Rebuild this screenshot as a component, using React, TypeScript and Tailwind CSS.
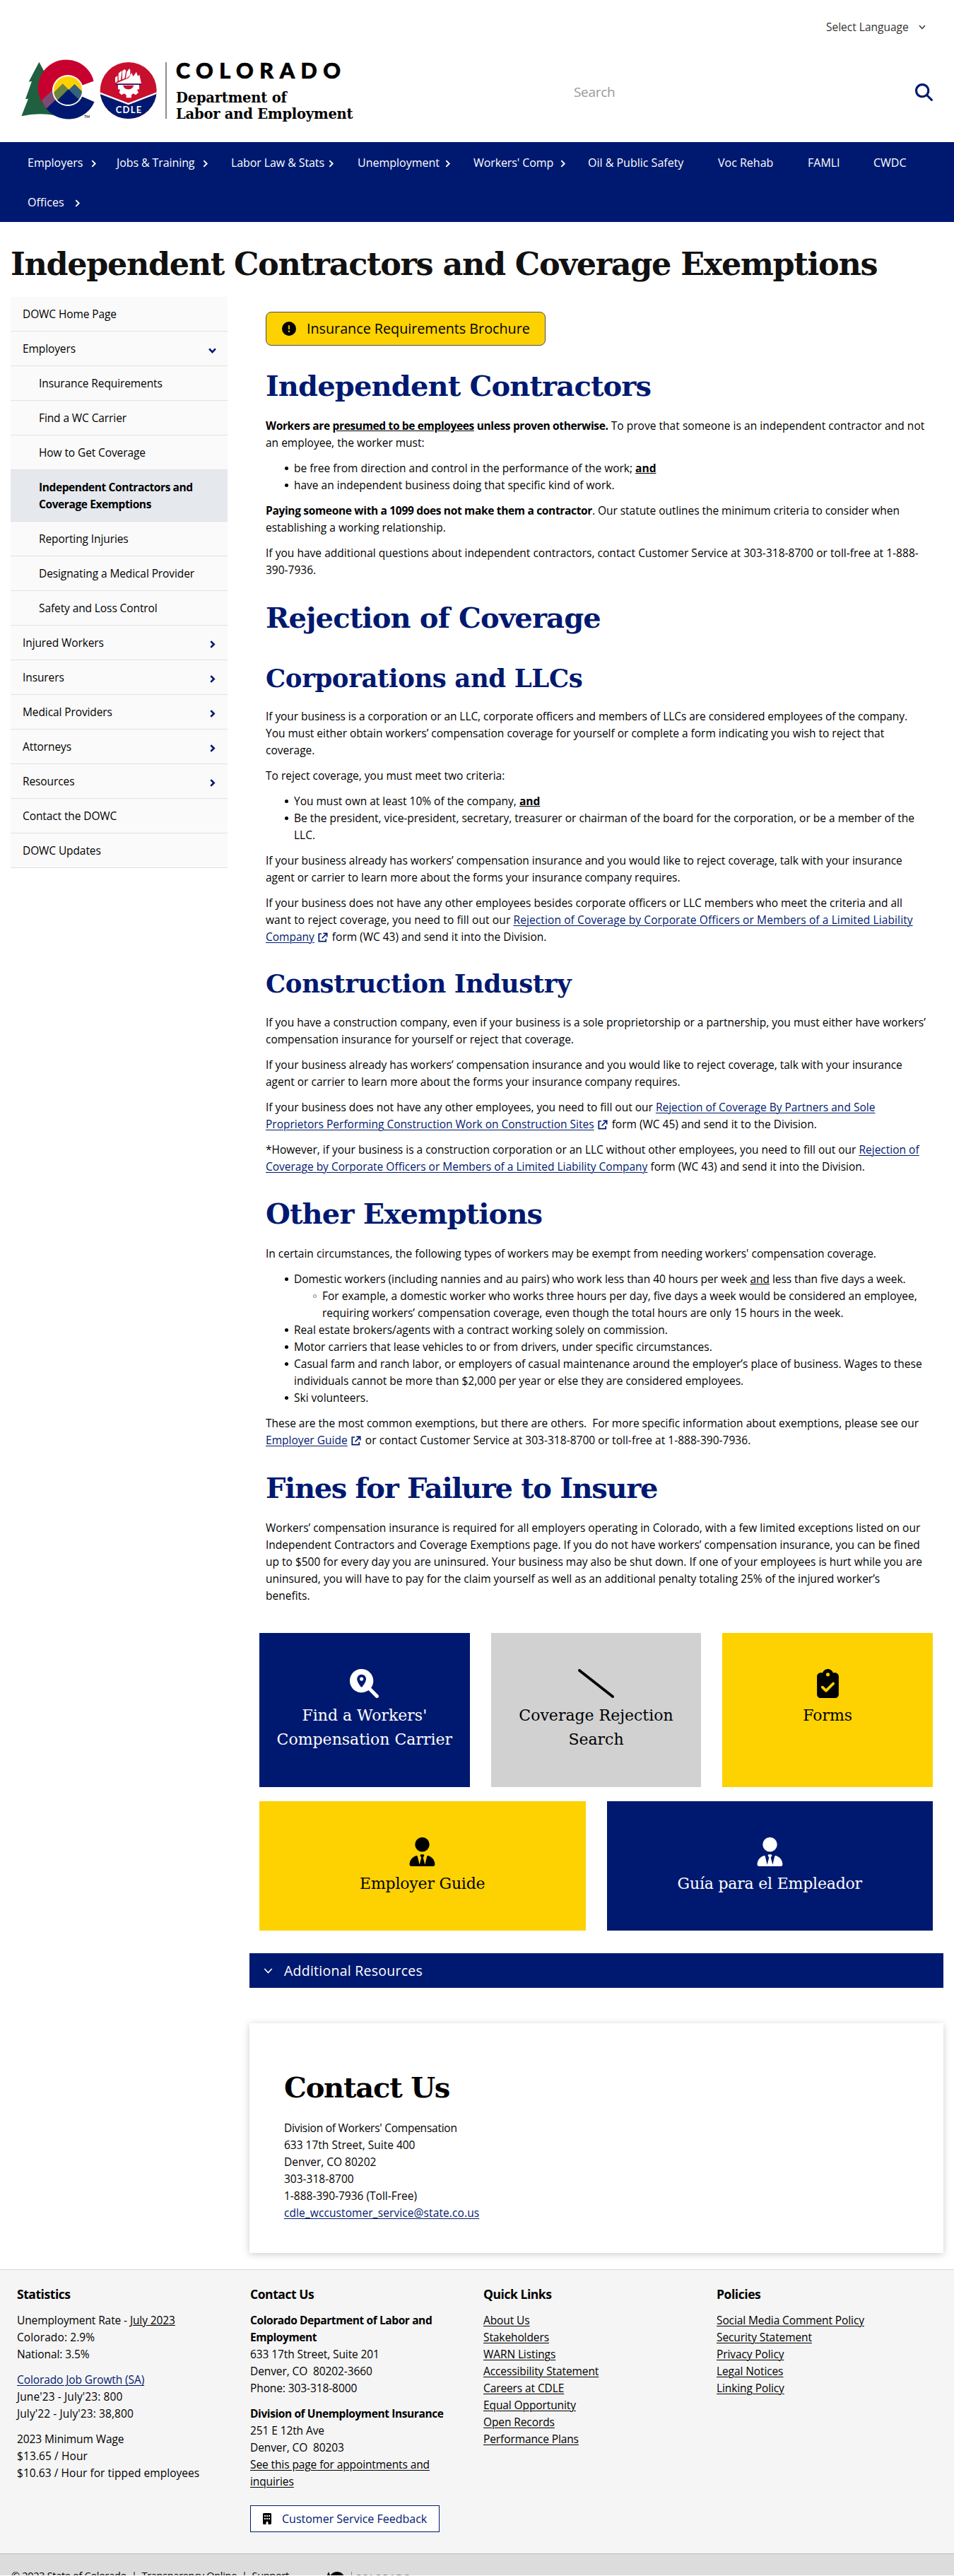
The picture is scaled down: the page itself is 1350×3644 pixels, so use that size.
import React from "react";
import type { ReactNode } from "react";
import {
  FaBuilding,
  FaCircleExclamation,
  FaClipboardCheck,
  FaMagnifyingGlass,
  FaMagnifyingGlassLocation,
  FaSlash,
  FaUserTie,
} from "react-icons/fa6";

type Dir = "right" | "down";

function Chevron({ dir, className }: { dir: Dir; className: string }) {
  return (
    <svg viewBox="0 0 10 10" className={className} fill="none" stroke="currentColor">
      <path d={dir === "right" ? "M3 1 L7 5 L3 9" : "M1 3 L5 7.4 L9 3"} />
    </svg>
  );
}

function ExternalIcon() {
  return (
    <svg viewBox="0 0 14 14" className="ml-[5px] mr-[2px] inline-block size-[14px] align-[-2px] text-[#001970]" fill="none" stroke="currentColor" strokeWidth="1.7">
      <path d="M5 2 H1.3 V12.7 H11.2 V9" />
      <path d="M7.5 1.3 H12.7 V6.5 M12.5 1.5 L5.5 8.5" />
    </svg>
  );
}

function Logo() {
  return (
    <svg viewBox="0 0 660 330" className="h-[110px] w-[220px]">
      <path d="M106 38 L62 122 L75 120 L48 196 L60 194 L31 268 Q100 252 172 264 L172 120 L148 116 Z" fill="#1f6040" />
      <path d="M338 120 A120 120 0 1 0 130 226 L230 159 Z" fill="#c8002f" />
      <path d="M341 206 A120 120 0 0 1 132 230 L176 182 L230 159 Z" fill="#001970" />
      <path d="M117 200 L160 160 L185 190 L136 236 Q124 220 117 200 Z" fill="#7d4a72" />
      <path d="M230 159 L352 114 L352 212 Z" fill="#ffffff" />
      <circle cx="228" cy="159" r="66" fill="#ffffff" />
      <circle cx="228" cy="159" r="60" fill="#ffd100" />
      <clipPath id="sun">
        <circle cx="228" cy="159" r="60" />
      </clipPath>
      <g clipPath="url(#sun)">
        <path d="M206 130 L150 186 L180 230 L250 174 Z" fill="#6b8440" />
        <path d="M257 132 L210 176 L270 230 L310 185 Z" fill="#35617f" />
        <path d="M230 154 L160 224 L230 260 L300 222 Z" fill="#001970" />
      </g>
      <text x="298" y="277" fontFamily="Lato, sans-serif" fontSize="15" fontWeight="700" fill="#222222">TM</text>

      <clipPath id="badge">
        <circle cx="485" cy="159" r="120" />
      </clipPath>
      <g clipPath="url(#badge)">
        <rect x="360" y="30" width="250" height="260" fill="#c8102e" />
        <path d="M360 170 L485 220 L610 170 V290 H360 Z" fill="#001970" />
        <path d="M360 168 L485 216 L610 168" fill="none" stroke="#ffffff" strokeWidth="7" />
      </g>
      <g fill="#ffffff">
        <path d="M429 126 V104 L439 96 V120 Z" />
        <path d="M443 118 V86 L455 76 L457 80 L453 114 Z" />
        <path d="M459 112 V76 L469 69 L475 74 L469 108 Z" />
        <path d="M478 80 L489 66 L493 72 V92 L482 104 L474 107 Z" />
        <path d="M431 130 L486 106 L499 84 L505 100 L519 80 L525 98 L532 92 L540 130 Z" />
        <path d="M441 135 H531 V153 L522 156 L528 168 L516 178 L506 172 L498 178 V190 H476 V178 L466 172 L456 178 L446 168 L450 156 L441 153 Z" />
      </g>
      <path d="M462 137 A24 24 0 0 0 508 137 Z" fill="#c8102e" />
      <rect x="431" y="131" width="109" height="4" fill="#001970" />
      <text x="431" y="256" textLength="110" fontFamily="Lato, sans-serif" fontSize="39" fontWeight="700" fill="#ffffff">CDLE</text>
      <rect x="643" y="39" width="4" height="240" fill="#555555" />
    </svg>
  );
}

function Header() {
  return (
    <header>
      <div className="flex h-[75px] justify-end pr-[40px] pt-[26px]">
        <div className="flex h-6 items-center text-[15.5px] text-[#333]">
          <span className="w-[132px]">Select Language</span>
          <Chevron dir="down" className="ml-[-1px] size-[10px] stroke-[1.5]" />
        </div>
      </div>
      <div className="flex h-[126px] pl-5">
        <Logo />
        <div className="ml-[9px] flex w-[563px] flex-col">
          <div className="mt-[6px] h-[36px] whitespace-nowrap font-['Lato'] text-[30.5px] font-black leading-[36px] tracking-[8.5px] text-black [-webkit-text-stroke:0.7px_black]">COLORADO</div>
          <div className="mt-[10px] font-['DejaVu_Serif',serif] text-[19.5px] font-bold leading-[23px] tracking-[-0.2px] text-black">
            <div>Department of</div>
            <div>Labor and Employment</div>
          </div>
        </div>
        <div className="flex h-[110px] flex-1 items-center justify-between pr-[30px]">
          <span className="text-[19px] tracking-[-0.3px] text-[#999]">Search</span>
          <FaMagnifyingGlass className="size-[25px] text-[#001970]" />
        </div>
      </div>
    </header>
  );
}

function NavItem({ label, width, gap }: { label: string; width: string; gap?: boolean }) {
  return (
    <div className={`flex items-center ${width}`}>
      <span>{label}</span>
      {gap && <Chevron dir="right" className="ml-auto mt-[3px] size-[11px] stroke-[1.7]" />}
    </div>
  );
}

function Nav() {
  return (
    <nav className="h-[113px] bg-[#001970] pl-[39px] text-[16px] text-white">
      <div className="flex h-[57px] items-center whitespace-nowrap">
        <NavItem label="Employers" width="w-[99px] mr-[27px]" gap />
        <NavItem label="Jobs & Training" width="w-[131px] mr-[31px] tracking-[-0.1px]" gap />
        <NavItem label="Labor Law & Stats" width="w-[147px] mr-[32px] tracking-[-0.1px]" gap />
        <NavItem label="Unemployment" width="w-[133px] mr-[31px]" gap />
        <NavItem label="Workers' Comp" width="w-[132px] mr-[30px] tracking-[-0.1px]" gap />
        <NavItem label="Oil & Public Safety" width="w-[184px]" />
        <NavItem label="Voc Rehab" width="w-[127px]" />
        <NavItem label="FAMLI" width="w-[93px]" />
        <NavItem label="CWDC" width="w-[60px]" />
      </div>
      <div className="flex h-[56px] items-center">
        <NavItem label="Offices" width="w-[76px]" gap />
      </div>
    </nav>
  );
}

type SideItem = { lines: string[]; sub?: boolean; active?: boolean; dir?: Dir };

const sideItems: SideItem[] = [
  { lines: ["DOWC Home Page"] },
  { lines: ["Employers"], dir: "down" },
  { lines: ["Insurance Requirements"], sub: true },
  { lines: ["Find a WC Carrier"], sub: true },
  { lines: ["How to Get Coverage"], sub: true },
  { lines: ["Independent Contractors and", "Coverage Exemptions"], sub: true, active: true },
  { lines: ["Reporting Injuries"], sub: true },
  { lines: ["Designating a Medical Provider"], sub: true },
  { lines: ["Safety and Loss Control"], sub: true },
  { lines: ["Injured Workers"], dir: "right" },
  { lines: ["Insurers"], dir: "right" },
  { lines: ["Medical Providers"], dir: "right" },
  { lines: ["Attorneys"], dir: "right" },
  { lines: ["Resources"], dir: "right" },
  { lines: ["Contact the DOWC"] },
  { lines: ["DOWC Updates"] },
];

function Sidebar() {
  return (
    <aside className="ml-[15px] w-[307px] shrink-0">
      {sideItems.map((item) => (
        <div
          key={item.lines[0]}
          className={`flex items-center justify-between whitespace-nowrap border-b border-[#e2e2e2] py-3 pr-4 leading-6 text-black ${item.sub ? "pl-10" : "pl-[17px]"} ${item.active ? "bg-[#e5e8ed] font-bold tracking-[-0.4px]" : "bg-[#fafafa] tracking-[-0.1px]"}`}
        >
          <div>
            {item.lines.map((l) => (
              <div key={l}>{l}</div>
            ))}
          </div>
          {item.dir && <Chevron dir={item.dir} className="mt-1 size-[11px] stroke-[2.4] text-[#001970]" />}
        </div>
      ))}
    </aside>
  );
}

const L = ({ children, className = "" }: { children: ReactNode; className?: string }) => (
  <span className={`block whitespace-pre ${className}`}>{children}</span>
);
const P = ({ children }: { children: ReactNode }) => <p className="mb-3">{children}</p>;
const A = ({ children }: { children: ReactNode }) => (
  <a className="text-[#001970] underline decoration-1 underline-offset-2">{children}</a>
);
const H2 = ({ children, className }: { children: ReactNode; className: string }) => (
  <h2 className={`whitespace-nowrap font-['DejaVu_Serif',serif] text-[40px] font-bold leading-[50px] text-[#001970] ${className}`}>{children}</h2>
);
const H3 = ({ children, className }: { children: ReactNode; className: string }) => (
  <h3 className={`whitespace-nowrap font-['DejaVu_Serif',serif] text-[35.5px] font-bold leading-[44px] tracking-[-0.4px] text-[#001970] ${className}`}>{children}</h3>
);

function Bullets({ children, hollow }: { children: ReactNode; hollow?: boolean }) {
  return (
    <ul
      className={`pl-10 [&>li]:relative [&>li]:before:absolute [&>li]:before:-left-[13px] [&>li]:before:top-[10px] [&>li]:before:size-[5px] [&>li]:before:rounded-full ${hollow ? "[&>li]:before:border [&>li]:before:border-[#777] [&>li]:before:bg-white" : "mb-3 [&>li]:before:bg-black"}`}
    >
      {children}
    </ul>
  );
}

function Article() {
  return (
    <article className="ml-[23px] mt-[21px] text-black">
      <div className="flex h-[48px] w-[396px] items-center rounded-lg border border-[#4a4a66] bg-[#fdd200] pl-[22px]">
        <FaCircleExclamation className="size-5" />
        <span className="ml-[15px] whitespace-nowrap text-[19.8px] tracking-[-0.03px]">Insurance Requirements Brochure</span>
      </div>

      <H2 className="mb-[19px] mt-8 tracking-[-0.85px]">Independent Contractors</H2>
      <P>
        <L className="tracking-[0.04px]"><b className="tracking-[-0.35px]">Workers are <u>presumed to be employees</u> unless proven otherwise.</b> To prove that someone is an independent contractor and not</L>
        <L>an employee, the worker must:</L>
      </P>
      <Bullets>
        <li>be free from direction and control in the performance of the work; <b className="underline">and</b></li>
        <li>have an independent business doing that specific kind of work.</li>
      </Bullets>
      <P>
        <L className="tracking-[-0.05px]"><b className="tracking-[-0.33px]">Paying someone with a 1099 does not make them a contractor</b>. Our statute outlines the minimum criteria to consider when</L>
        <L>establishing a working relationship.</L>
      </P>
      <P>
        <L className="tracking-[0.03px]">If you have additional questions about independent contractors, contact Customer Service at 303-318-8700 or toll-free at 1-888-</L>
        <L>390-7936.</L>
      </P>

      <H2 className="mt-[31px] tracking-[-0.85px]">Rejection of Coverage</H2>
      <H3 className="mb-[19px] mt-[39px]">Corporations and LLCs</H3>
      <P>
        <L className="tracking-[-0.06px]">If your business is a corporation or an LLC, corporate officers and members of LLCs are considered employees of the company.</L>
        <L>You must either obtain workers’ compensation coverage for yourself or complete a form indicating you wish to reject that</L>
        <L>coverage.</L>
      </P>
      <P>To reject coverage, you must meet two criteria:</P>
      <Bullets>
        <li>You must own at least 10% of the company, <b className="underline">and</b></li>
        <li>
          <L>Be the president, vice-president, secretary, treasurer or chairman of the board for the corporation, or be a member of the</L>
          <L>LLC.</L>
        </li>
      </Bullets>
      <P>
        <L>If your business already has workers’ compensation insurance and you would like to reject coverage, talk with your insurance</L>
        <L>agent or carrier to learn more about the forms your insurance company requires.</L>
      </P>
      <P>
        <L>If your business does not have any other employees besides corporate officers or LLC members who meet the criteria and all</L>
        <L className="tracking-[0.11px]">want to reject coverage, you need to fill out our <A>Rejection of Coverage by Corporate Officers or Members of a Limited Liability</A></L>
        <L><A>Company</A><ExternalIcon /> form (WC 43) and send it into the Division.</L>
      </P>

      <H3 className="mb-[20px] mt-[33px]">Construction Industry</H3>
      <P>
        <L>If you have a construction company, even if your business is a sole proprietorship or a partnership, you must either have workers’</L>
        <L>compensation insurance for yourself or reject that coverage.</L>
      </P>
      <P>
        <L>If your business already has workers’ compensation insurance and you would like to reject coverage, talk with your insurance</L>
        <L>agent or carrier to learn more about the forms your insurance company requires.</L>
      </P>
      <P>
        <L>If your business does not have any other employees, you need to fill out our <A>Rejection of Coverage By Partners and Sole</A></L>
        <L><A>Proprietors Performing Construction Work on Construction Sites</A><ExternalIcon /> form (WC 45) and send it to the Division.</L>
      </P>
      <P>
        <L>*However, if your business is a construction corporation or an LLC without other employees, you need to fill out our <A>Rejection of</A></L>
        <L>
          <A>Coverage by Corporate Officers or Members of a Limited Liability Company</A> form (WC 43) and send it into the Division.
        </L>
      </P>

      <H2 className="mb-[19px] mt-[30px] tracking-[-0.85px]">Other Exemptions</H2>
      <P>In certain circumstances, the following types of workers may be exempt from needing workers' compensation coverage.</P>
      <Bullets>
        <li>
          <L className="tracking-[-0.04px]">Domestic workers (including nannies and au pairs) who work less than 40 hours per week <u>and</u> less than five days a week.</L>
          <Bullets hollow>
            <li>
              <L>For example, a domestic worker who works three hours per day, five days a week would be considered an employee,</L>
              <L>requiring workers’ compensation coverage, even though the total hours are only 15 hours in the week.</L>
            </li>
          </Bullets>
        </li>
        <li>Real estate brokers/agents with a contract working solely on commission.</li>
        <li>Motor carriers that lease vehicles to or from drivers, under specific circumstances.</li>
        <li>
          <L>Casual farm and ranch labor, or employers of casual maintenance around the employer’s place of business. Wages to these</L>
          <L>individuals cannot be more than $2,000 per year or else they are considered employees.</L>
        </li>
        <li>Ski volunteers.</li>
      </Bullets>
      <P>
        <L>These are the most common exemptions, but there are others.  For more specific information about exemptions, please see our</L>
        <L className="tracking-[0.03px]"><A>Employer Guide</A><ExternalIcon /> or contact Customer Service at 303-318-8700 or toll-free at 1-888-390-7936.</L>
      </P>

      <H2 className="mb-[19px] mt-[31px] tracking-[-1.35px]">Fines for Failure to Insure</H2>
      <p>
        <L>Workers’ compensation insurance is required for all employers operating in Colorado, with a few limited exceptions listed on our</L>
        <L>Independent Contractors and Coverage Exemptions page. If you do not have workers’ compensation insurance, you can be fined</L>
        <L>up to $500 for every day you are uninsured. Your business may also be shut down. If one of your employees is hurt while you are</L>
        <L>uninsured, you will have to pay for the claim yourself as well as an additional penalty totaling 25% of the injured worker’s</L>
        <L>benefits.</L>
      </p>
    </article>
  );
}

function Tile({ tone, icon, lines }: { tone: string; icon: ReactNode; lines: string[] }) {
  return (
    <div className={`flex flex-1 flex-col items-center pt-[51px] font-['DejaVu_Serif',serif] text-[22px] leading-[34px] ${tone}`}>
      {icon}
      <div className="mt-[8px] whitespace-nowrap text-center">
        {lines.map((l) => (
          <div key={l}>{l}</div>
        ))}
      </div>
    </div>
  );
}

function Tiles() {
  return (
    <section className="ml-[14px] mr-[30px] mt-[41px]">
      <div className="flex h-[218px] gap-[30px]">
        <Tile tone="bg-[#001970] text-white" icon={<FaMagnifyingGlassLocation className="size-[41px]" />} lines={["Find a Workers'", "Compensation Carrier"]} />
        <Tile tone="bg-[#d1d1d1] text-black" icon={<FaSlash className="h-[41px] w-[51px]" />} lines={["Coverage Rejection", "Search"]} />
        <Tile tone="bg-[#fdd200] text-black" icon={<FaClipboardCheck className="size-[41px]" />} lines={["Forms"]} />
      </div>
      <div className="mt-5 flex h-[183px] gap-[30px] tracking-[-0.2px]">
        <Tile tone="bg-[#fdd200] text-black" icon={<FaUserTie className="size-[41px]" />} lines={["Employer Guide"]} />
        <Tile tone="bg-[#001970] text-white" icon={<FaUserTie className="size-[41px]" />} lines={["Guía para el Empleador"]} />
      </div>
    </section>
  );
}

function ContactCard() {
  return (
    <section className="mr-[15px] mt-[50px] h-[325px] bg-white pl-[49px] pt-[66px] text-black shadow-[0_2px_10px_rgba(0,0,0,0.2)]">
      <h2 className="mb-[20px] font-['DejaVu_Serif',serif] text-[40px] font-bold leading-[50px] tracking-[-1.2px]">Contact Us</h2>
      <L className="tracking-[-0.25px]">Division of Workers' Compensation</L>
      <L>633 17th Street, Suite 400</L>
      <L>Denver, CO 80202</L>
      <L>303-318-8700</L>
      <L>1-888-390-7936 (Toll-Free)</L>
      <L className="tracking-[0.1px]"><A>cdle_wccustomer_service@state.co.us</A></L>
    </section>
  );
}

const quickLinks = ["About Us", "Stakeholders", "WARN Listings", "Accessibility Statement", "Careers at CDLE", "Equal Opportunity", "Open Records", "Performance Plans"];
const policies = ["Social Media Comment Policy", "Security Statement", "Privacy Policy", "Legal Notices", "Linking Policy"];

function Column({ title, children }: { title: string; children: ReactNode }) {
  return (
    <div className="w-[330px] shrink-0">
      <h4 className="mb-[13px] text-[17.5px] font-bold leading-6 tracking-[-0.45px]">{title}</h4>
      {children}
    </div>
  );
}

function LinkList({ items }: { items: string[] }) {
  return (
    <ul>
      {items.map((i) => (
        <li key={i} className="underline decoration-1 underline-offset-2">{i}</li>
      ))}
    </ul>
  );
}

function Footer() {
  return (
    <footer className="mt-[23px] text-black">
      <div className="flex h-[402px] border-t border-[#d8d8d8] bg-[#f5f5f5] pl-6 pt-[22px] tracking-[-0.1px]">
        <Column title="Statistics">
          <P>
            <L>Unemployment Rate - <u>July 2023</u></L>
            <L className="tracking-[0.1px]">Colorado: 2.9%</L>
            <L>National: 3.5%</L>
          </P>
          <P>
            <L><A>Colorado Job Growth (SA)</A></L>
            <L className="tracking-[0.1px]">June'23 - July'23: 800</L>
            <L className="tracking-[0.1px]">July'22 - July'23: 38,800</L>
          </P>
          <P>
            <L>2023 Minimum Wage</L>
            <L className="tracking-[0.1px]">$13.65 / Hour</L>
            <L className="tracking-[0.05px]">$10.63 / Hour for tipped employees</L>
          </P>
        </Column>
        <Column title="Contact Us">
          <P>
            <L className="font-bold tracking-[-0.4px]">Colorado Department of Labor and</L>
            <L className="font-bold tracking-[-0.4px]">Employment</L>
            <L>633 17th Street, Suite 201</L>
            <L>Denver, CO  80202-3660</L>
            <L>Phone: 303-318-8000</L>
          </P>
          <P>
            <L className="font-bold tracking-[-0.4px]">Division of Unemployment Insurance</L>
            <L>251 E 12th Ave</L>
            <L>Denver, CO  80203</L>
            <L><u className="underline-offset-2">See this page for appointments and</u></L>
            <L><u className="underline-offset-2">inquiries</u></L>
          </P>
          <div className="mt-[22px] flex h-[38px] w-[268px] items-center border border-[#001970] bg-white pl-[15px]">
            <FaBuilding className="size-4" />
            <span className="ml-[13px] whitespace-nowrap text-[16px] tracking-normal text-[#001970]">Customer Service Feedback</span>
          </div>
        </Column>
        <Column title="Quick Links">
          <LinkList items={quickLinks} />
        </Column>
        <Column title="Policies">
          <LinkList items={policies} />
        </Column>
      </div>
      <div className="flex h-[31px] items-start overflow-hidden border-t border-[#bdbdbd] bg-[#dcdcdc] pl-4">
        <div className="mt-[19px] w-[443px] whitespace-pre text-[14.5px] leading-6 tracking-[-0.3px]">© 2023 State of Colorado  |  Transparency Online  |  Support</div>
        <svg viewBox="0 0 130 30" className="mt-[25px] h-[30px] w-[130px]">
          <path d="M6 0 L0 14 H12 Z" fill="#111111" />
          <circle cx="18" cy="11" r="11" fill="#000000" />
          <rect x="38" y="0" width="1" height="24" fill="#888888" />
          <text x="44" y="12" textLength="78" fontFamily="Lato, sans-serif" fontSize="12" fontWeight="700" fill="#777777">COLORADO</text>
        </svg>
      </div>
    </footer>
  );
}

export default function App() {
  return (
    <div className="h-[3644px] w-[1350px] overflow-hidden bg-white font-['Open_Sans','Noto_Sans',sans-serif] text-[15.5px] leading-6">
      <Header />
      <Nav />
      <h1 className="mb-[21px] ml-[15px] mt-[33px] whitespace-nowrap font-['DejaVu_Serif',serif] text-[44.5px] font-bold leading-[52px] tracking-[-1.35px] text-[#111]">
        Independent Contractors and Coverage Exemptions
      </h1>
      <div className="flex">
        <Sidebar />
        <main className="ml-[31px] min-w-0 flex-1">
          <Article />
          <Tiles />
          <div className="mr-[15px] mt-[32px] flex h-[49px] items-center bg-[#001970] pl-5 text-[19.5px] text-white">
            <Chevron dir="down" className="size-[13px] stroke-[1.2]" />
            <span className="ml-4 mt-px tracking-[0.25px]">Additional Resources</span>
          </div>
          <ContactCard />
        </main>
      </div>
      <Footer />
    </div>
  );
}
